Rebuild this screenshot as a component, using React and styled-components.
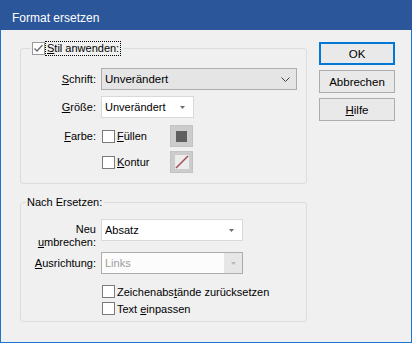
import React from "react";
import styled, { createGlobalStyle } from "styled-components";

const Global = createGlobalStyle`
  html, body { margin: 0; padding: 0; background: #f0f0f0; }
  body { font-family: "Segoe UI", "Liberation Sans", Arial, sans-serif; font-size: 11px; color: #000; }
  * { box-sizing: border-box; }
`;

const Window = styled.div`
  width: 412px;
  height: 343px;
  display: flex;
  flex-direction: column;
  background: #f0f0f0;
  border: 1px solid #1c74d0;
  border-top: none;
`;

const TitleBar = styled.div`
  height: 30px;
  margin: 0 -1px;
  background: #2b579a;
  color: #fff;
  padding: 10px 0 0 12px;
  font-size: 12px;
  line-height: 16px;
`;

const Body = styled.div`
  display: flex;
  gap: 12px;
  padding: 11px 0 0 19px;
`;

const Main = styled.div`
  width: 287px;
  display: flex;
  flex-direction: column;
`;

const Group = styled.fieldset`
  margin: ${(p) => p.$top || 0}px 0 0 0;
  padding: 0;
  border: 1px solid #dcdcdc;
  border-radius: 3px;
  min-width: 0;
`;

const Legend = styled.legend`
  margin-left: ${(p) => p.$indent}px;
  padding: 0 2px 0 1px;
  height: 15px;
  line-height: 15px;
  display: flex;
  align-items: center;
`;

const GroupContent = styled.div`
  display: flex;
  flex-direction: column;
  padding: ${(p) => p.$pt}px 9px ${(p) => p.$pb}px 0;
`;

const Row = styled.div`
  display: grid;
  grid-template-columns: 75px auto;
  grid-template-rows: ${(p) => p.$h || 22}px;
  column-gap: 5px;
  align-items: ${(p) => (p.$top ? "start" : "center")};
  margin-top: ${(p) => p.$mt || 0}px;
  height: ${(p) => p.$h || 22}px;
`;

const Label = styled.div`
  text-align: right;
  line-height: 13px;
  padding-top: ${(p) => p.$pt || 0}px;
  white-space: nowrap;
`;

const U = styled.span`
  text-decoration: underline;
  text-underline-offset: 1px;
`;

const FocusText = styled.span`
  outline: 1px dotted #000;
  outline-offset: -1px;
  padding: 0 2px 0 2px;
  line-height: 15px;
  height: 15px;
`;

const Box = styled.span`
  width: 13px;
  height: 13px;
  flex: none;
  border: 1px solid ${(p) => (p.$muted ? "#9a9a9a" : "#7a7a7a")};
  background: #fff;
  display: inline-flex;
  align-items: center;
  justify-content: center;
`;

const Check = styled.label`
  display: flex;
  align-items: center;
  gap: 2px;
  height: 17px;
  margin-left: 1px;
  white-space: nowrap;
`;

const Select = styled.div`
  width: ${(p) => (p.$w ? `${p.$w}px` : "100%")};
  height: 22px;
  display: flex;
  align-items: center;
  justify-content: space-between;
  padding-left: 3px;
  background: ${(p) => (p.$list ? "#e5e5e5" : p.$disabled ? "#fcfcfc" : "#fff")};
  border: 1px solid ${(p) => (p.$list || p.$disabled ? "#adadad" : "#d9d9d9")};
  color: ${(p) => (p.$disabled ? "#9d9d9d" : "#000")};
  font-size: ${(p) => (p.$list ? "11.5px" : "11px")};
  font-weight: ${(p) => (p.$list ? 500 : 400)};
`;

const ArrowZone = styled.span`
  width: ${(p) => (p.$w ? p.$w : 18)}px;
  height: 100%;
  display: flex;
  align-items: center;
  justify-content: center;
  background: ${(p) => (p.$disabled ? "#e6e6e6" : "transparent")};
`;

const ColorRow = styled.div`
  display: grid;
  grid-template-columns: 69px 23px;
  align-items: center;
`;

const ColorButton = styled.div`
  width: 23px;
  height: 22px;
  background: #cccccc;
  border: 1px solid #c3c3c3;
  display: flex;
  align-items: center;
  justify-content: center;
`;

const Swatch = styled.span`
  width: 11px;
  height: 11px;
  background: #5f5f5f;
`;

const Buttons = styled.div`
  display: flex;
  flex-direction: column;
  gap: 5px;
  margin-top: 1px;
`;

const Button = styled.button`
  width: 76px;
  height: 23px;
  padding: 0;
  font: inherit;
  font-size: 11.5px;
  color: #000;
  background: #e9e9e9;
  border: 1px solid ${(p) => (p.$default ? "#0078d7" : "#adadad")};
  box-shadow: ${(p) => (p.$default ? "inset 0 0 0 1px #0078d7" : "none")};
`;

const Chevron = () => (
  <svg width="9" height="5" viewBox="0 0 9 5">
    <polyline points="0.5,0.5 4.5,4.5 8.5,0.5" fill="none" stroke="#404040" strokeWidth="1" />
  </svg>
);

const Tri = ({ color = "#6d6d6d" }) => (
  <svg width="5" height="3" viewBox="0 0 5 3">
    <polygon points="0,0 5,0 2.5,3" fill={color} />
  </svg>
);

const CheckBox = ({ checked, muted }) => (
  <Box $muted={muted}>
    {checked && (
      <svg width="11" height="11" viewBox="0 0 11 11">
        <polyline points="1.5,5.5 4,8 9.5,2" fill="none" stroke="#6a6a6a" strokeWidth="1.3" />
      </svg>
    )}
  </Box>
);

export default function App() {
  return (
    <>
      <Global />
      <Window>
        <TitleBar>Format ersetzen</TitleBar>
        <Body>
          <Main>
            <Group>
              <Legend $indent={10}>
                <CheckBox checked muted />
                <FocusText>
                  <U>S</U>til anwenden:
                </FocusText>
              </Legend>
              <GroupContent $pt={12} $pb={10}>
                <Row>
                  <Label>
                    <U>S</U>chrift:
                  </Label>
                  <Select $list>
                    <span>Unverändert</span>
                    <ArrowZone $w={22}>
                      <Chevron />
                    </ArrowZone>
                  </Select>
                </Row>
                <Row $mt={6}>
                  <Label>
                    <U>G</U>röße:
                  </Label>
                  <Select $w={93}>
                    <span>Unverändert</span>
                    <ArrowZone $w={21}>
                      <Tri />
                    </ArrowZone>
                  </Select>
                </Row>
                <Row $mt={7}>
                  <Label>
                    <U>F</U>arbe:
                  </Label>
                  <ColorRow>
                    <Check>
                      <CheckBox />
                      <span>
                        <U>F</U>üllen
                      </span>
                    </Check>
                    <ColorButton>
                      <Swatch />
                    </ColorButton>
                  </ColorRow>
                </Row>
                <Row $mt={4}>
                  <span />
                  <ColorRow>
                    <Check>
                      <CheckBox />
                      <span>
                        <U>K</U>ontur
                      </span>
                    </Check>
                    <ColorButton>
                      <svg width="14" height="14" viewBox="0 0 14 14">
                        <rect x="0" y="0" width="14" height="14" fill="#ececec" />
                        <line x1="1" y1="13" x2="13" y2="1" stroke="#a3525a" strokeWidth="1.6" />
                      </svg>
                    </ColorButton>
                  </ColorRow>
                </Row>
              </GroupContent>
            </Group>

            <Group $top={11}>
              <Legend $indent={5}>Nach Ersetzen:</Legend>
              <GroupContent $pt={9} $pb={4}>
                <Row $top>
                  <Label $pt={4}>
                    Neu
                    <br />
                    <U>u</U>mbrechen:
                  </Label>
                  <Select $w={142}>
                    <span>Absatz</span>
                    <ArrowZone $w={21}>
                      <Tri />
                    </ArrowZone>
                  </Select>
                </Row>
                <Row $mt={11}>
                  <Label>
                    <U>A</U>usrichtung:
                  </Label>
                  <Select $w={142} $disabled>
                    <span>Links</span>
                    <ArrowZone $w={18} $disabled>
                      <Tri color="#b8b8b8" />
                    </ArrowZone>
                  </Select>
                </Row>
                <Row $mt={9} $h={17}>
                  <span />
                  <Check>
                    <CheckBox />
                    <span>
                      Zeichenabs<U>t</U>ände zurücksetzen
                    </span>
                  </Check>
                </Row>
                <Row $h={17}>
                  <span />
                  <Check>
                    <CheckBox />
                    <span>
                      Text <U>e</U>inpassen
                    </span>
                  </Check>
                </Row>
              </GroupContent>
            </Group>
          </Main>
          <Buttons>
            <Button $default>OK</Button>
            <Button>Abbrechen</Button>
            <Button>
              <U>H</U>ilfe
            </Button>
          </Buttons>
        </Body>
      </Window>
    </>
  );
}
